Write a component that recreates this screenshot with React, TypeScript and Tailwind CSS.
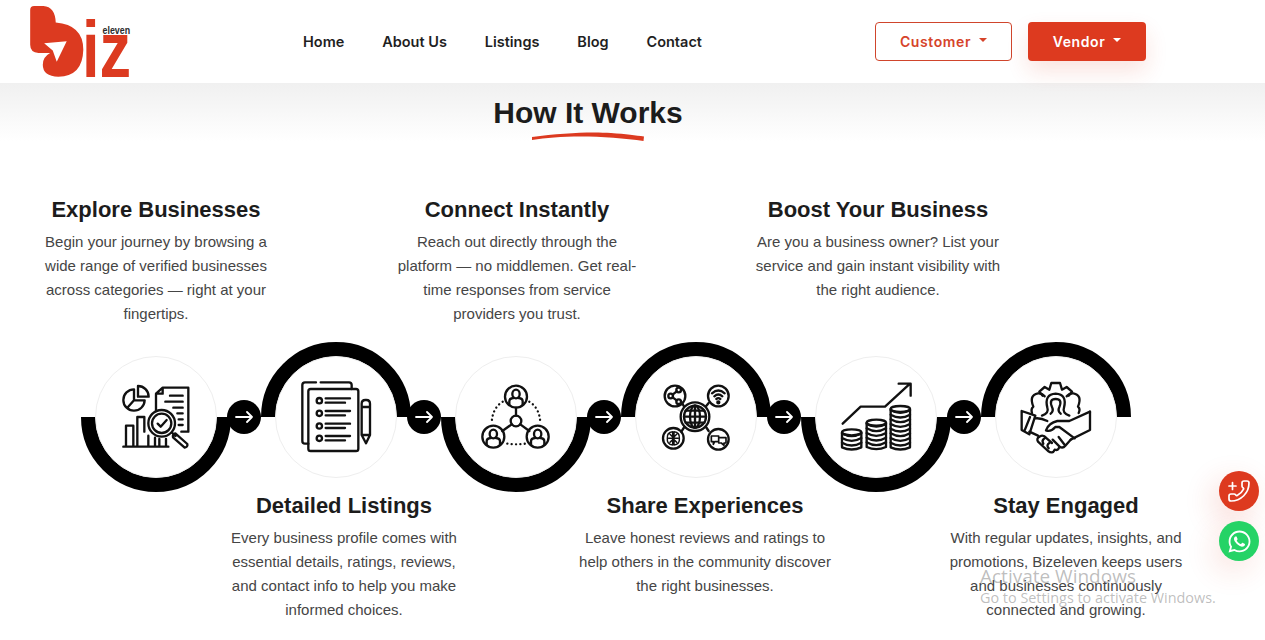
import { FaWhatsapp } from "react-icons/fa";

const sans = "font-['Liberation_Sans',Arial,sans-serif]";

function Logo() {
  return (
    <svg width="150" height="83" viewBox="0 0 450 250" className="block shrink-0 overflow-visible" aria-label="Biz eleven logo">
      <path
        d="M90 30 Q90 18 102 18 L130 18 Q165 20 167 68 Q250 75 250 150 Q248 230 175 231 Q128 230 128 195 Q128 172 150 160 L115 160 Q90 158 90 135 Z"
        fill="#dc3a20"
      />
      <path d="M132 130 L200 124 L170 186 L158 152 Z" fill="#fff" />
      <text x="246" y="231" fontFamily="Liberation Sans" fontWeight="700" fontSize="239" fill="#dc3a20" textLength="148" lengthAdjust="spacingAndGlyphs">
        iz
      </text>
      <text x="308" y="102" fontFamily="Liberation Sans" fontWeight="700" fontSize="34" fill="#2b2b2b" textLength="83" lengthAdjust="spacingAndGlyphs">
        eleven
      </text>
    </svg>
  );
}

function Caret({ color }: { color: string }) {
  return <span className={`inline-block w-0 h-0 border-x-4 border-x-transparent border-t-4 ${color} mb-[3px]`} />;
}

function Header() {
  return (
    <header className="h-[83px] bg-white flex items-center font-['Inter',sans-serif]">
      <Logo />
      <nav className="ml-[153px] w-[399px] flex justify-between text-[14.5px] font-semibold text-[#1f1f1f]">
        <a>Home</a>
        <a>About Us</a>
        <a>Listings</a>
        <a>Blog</a>
        <a>Contact</a>
      </nav>
      <div className="ml-[173px] flex gap-4 text-[14px] font-semibold tracking-[0.6px]">
        <button className="w-[137px] h-[39px] rounded border border-[#d0452c] bg-white text-[#d6432a] flex items-center justify-center gap-2">
          Customer <Caret color="border-t-[#d6432a]" />
        </button>
        <button className="w-[118px] h-[39px] rounded bg-[#dd3a1f] text-white flex items-center justify-center gap-2 shadow-[0_10px_22px_rgba(221,58,31,0.14)]">
          Vendor <Caret color="border-t-white" />
        </button>
      </div>
    </header>
  );
}

/* icons use the same 270x240 box so they sit at the same spot in each circle */
function IconBox({ children }: { children: React.ReactNode }) {
  return (
    <svg width="90" height="80" viewBox="3 6 270 240" fill="none" stroke="#111" strokeWidth="7" strokeLinecap="round" strokeLinejoin="round">
      {children}
    </svg>
  );
}

function AnalyticsIcon() {
  return (
    <IconBox>
      <path d="M72 43 A32 32 0 1 0 104 76 L72 76 Z M72 76 L52 98" />
      <path d="M84 33 A32 32 0 0 1 116 65 L84 65 Z" />
      <path d="M158 38 H235 V170 H214 M158 38 L138 56 V108 M158 38 V56 H138" />
      <path d="M180 62 H218 M166 80 H218 M190 98 H218 M202 115 H218 M206 133 H218 M206 150 H218" />
      <circle cx="155" cy="145" r="40" />
      <circle cx="155" cy="145" r="29" />
      <path d="M143 146 L152 155 L170 135" />
      <path d="M187 174 L196 183 M196 175 L232 207 Q234 216 224 218 L189 187 Q187 178 196 175 Z" />
      <path d="M40 215 H175 M48 215 V152 H70 V215 M82 215 V126 H103 V170 M115 215 V182 M135 215 V188 M148 215 V192 M168 215 V192" />
    </IconBox>
  );
}

function ListingsIcon() {
  return (
    <IconBox>
      <path d="M78 22 H45 Q37 22 37 30 V198 Q37 206 45 206 H55 M92 22 H177 Q185 22 185 30 V42" />
      <rect x="55" y="42" width="150" height="186" rx="7" />
      {[77, 115, 153, 190].map((y) => (
        <g key={y}>
          <circle cx="88" cy={y} r="8" />
          <path d={`M107 ${y - 7} H180 M107 ${y + 6} H165`} />
        </g>
      ))}
      <path d="M215 180 V86 Q215 75 226 75 H229 Q240 75 240 86 V180 L228 205 Z M215 96 H240 M215 180 H240" />
    </IconBox>
  );
}

function Person({ cx, cy }: { cx: number; cy: number }) {
  return (
    <g>
      <circle cx={cx} cy={cy} r="33" />
      <ellipse cx={cx} cy={cy - 8} rx="11" ry="13" />
      <path d={`M${cx - 20} ${cy + 24} V${cy + 14} Q${cx - 20} ${cy + 5} ${cx - 8} ${cy + 4} M${cx + 20} ${cy + 24} V${cy + 14} Q${cx + 20} ${cy + 5} ${cx + 8} ${cy + 4}`} />
    </g>
  );
}

function ConnectIcon() {
  return (
    <IconBox>
      <Person cx={138} cy={65} />
      <Person cx={70} cy={185} />
      <Person cx={203} cy={185} />
      <circle cx="138" cy="138" r="16" />
      <path d="M138 122 V98 M125 148 L97 168 M151 148 L178 168" />
      <g strokeWidth="7" strokeDasharray="0.1 13">
        <path d="M98 80 Q66 100 65 146" />
        <path d="M178 80 Q210 100 211 146" />
        <path d="M112 206 Q138 210 166 206" />
      </g>
    </IconBox>
  );
}

function ShareIcon() {
  return (
    <IconBox>
      <circle cx="135" cy="125" r="43" />
      <circle cx="135" cy="125" r="33" />
      <ellipse cx="135" cy="125" rx="15" ry="33" />
      <path d="M135 92 V158 M102 125 H168 M107 107 H163 M107 143 H163" />
      <path d="M96 84 L102 94 M176 84 L168 94 M94 170 L103 156 M176 168 L168 156" />
      <circle cx="75" cy="63" r="31" />
      <circle cx="86" cy="45" r="7" />
      <circle cx="62" cy="63" r="7" />
      <circle cx="86" cy="80" r="7" />
      <path d="M68 59 L80 49 M68 67 L80 76" />
      <circle cx="205" cy="63" r="31" />
      <path d="M186 55 Q205 38 224 55 M193 64 Q205 53 217 64 M199 72 Q205 67 211 72" />
      <circle cx="205" cy="82" r="3" fill="#111" />
      <circle cx="70" cy="190" r="31" />
      <path d="M68 170 Q50 172 52 190 Q50 208 68 210 Z M72 170 Q90 172 88 190 Q90 208 72 210 Z M56 190 H66 M74 190 H84 M60 178 L66 184 M80 178 L74 184 M60 202 L66 196 M80 202 L74 196" strokeWidth="4.5" />
      <circle cx="205" cy="193" r="31" />
      <path d="M184 183 H206 V200 H194 L190 208 V200 H184 Z M210 188 H228 V204 H222 V211 L214 204 H206" strokeWidth="5" />
    </IconBox>
  );
}

function Coins({ x, top, count }: { x: number; top: number; count: number }) {
  const w = 29;
  const step = 14;
  const bottom = top + count * step;
  return (
    <g>
      <ellipse cx={x} cy={top} rx={w} ry="9" />
      {Array.from({ length: count }).map((_, i) => (
        <path key={i} d={`M${x - w} ${top + i * step + 3} Q${x} ${top + i * step + 20} ${x + w} ${top + i * step + 3}`} />
      ))}
      <path d={`M${x - w} ${top} V${bottom + 3} Q${x} ${bottom + 16} ${x + w} ${bottom + 3} V${top}`} />
    </g>
  );
}

function GrowthIcon() {
  return (
    <IconBox>
      <path d="M38 146 L92 95 H165 L240 26 M206 26 H242 V62" />
      <Coins x={65} top={172} count={3} />
      <Coins x={139} top={143} count={5} />
      <Coins x={211} top={102} count={8} />
    </IconBox>
  );
}

function EngageIcon() {
  return (
    <IconBox>
      {/* gear behind the people */}
      <path d="M98 62 L88 50 L104 36 L118 44 L124 24 H150 L156 44 L170 36 L186 50 L176 62" />
      {/* side heads */}
      <path d="M66 114 Q62 102 70 95 Q56 60 84 55 Q96 54 104 64 M206 114 Q212 102 204 95 Q218 60 190 55 Q178 54 170 64" />
      {/* centre person */}
      <path d="M96 122 Q118 114 112 98 Q102 58 137 56 Q172 58 162 98 Q156 114 178 122" />
      <path d="M122 116 Q132 108 126 96 Q116 72 137 72 Q158 72 148 96 Q142 108 152 116" />
      {/* cuffs */}
      <path d="M35 108 L76 122 L58 178 L35 165 Z M60 126 L44 166" />
      <path d="M240 110 V165 L182 194" />
      <path d="M240 110 L178 138 H142 Q116 144 108 166 Q122 172 136 156 H148 L194 190" />
      {/* shaking hands and fingers */}
      <path d="M76 130 Q92 128 112 138 M58 170 L84 182 M182 194 L166 212 Q158 222 148 214 Q146 228 134 224 Q128 238 114 228 L84 200 Q78 190 90 184 Q100 178 110 190 L126 204 M100 206 Q94 196 104 190 M116 220 Q108 210 118 204 M148 214 L128 194 M166 212 L146 186" />
    </IconBox>
  );
}

const stepIcons = [AnalyticsIcon, ListingsIcon, ConnectIcon, ShareIcon, GrowthIcon, EngageIcon];

const topSteps = [
  {
    title: "Explore Businesses",
    text: "Begin your journey by browsing a wide range of verified businesses across categories — right at your fingertips.",
  },
  {
    title: "Connect Instantly",
    text: "Reach out directly through the platform — no middlemen. Get real-time responses from service providers you trust.",
  },
  {
    title: "Boost Your Business",
    text: "Are you a business owner? List your service and gain instant visibility with the right audience.",
  },
];

const bottomSteps = [
  {
    title: "Detailed Listings",
    text: "Every business profile comes with essential details, ratings, reviews, and contact info to help you make informed choices.",
  },
  {
    title: "Share Experiences",
    text: "Leave honest reviews and ratings to help others in the community discover the right businesses.",
  },
  {
    title: "Stay Engaged",
    text: "With regular updates, insights, and promotions, Bizeleven keeps users and businesses continuously connected and growing.",
  },
];

function StepText({ title, text }: { title: string; text: string }) {
  return (
    <div className="w-[252px] text-center">
      <h3 className="text-[22px] leading-7 font-bold text-[#1c1c1c]">{title}</h3>
      <p className="mt-[6px] text-[15px] leading-6 text-[#454545]">{text}</p>
    </div>
  );
}

function Wave() {
  return (
    <div className="flex pl-[66px] mt-4 h-[150px]">
      {stepIcons.map((Icon, i) => (
        <div key={i} className="relative w-[180px] h-[150px] flex items-center justify-center">
          <svg width="150" height="150" viewBox="0 0 150 150" fill="none" className="absolute left-[15px] top-0">
            <path
              d={i % 2 === 0 ? "M7.5 75 A67.5 67.5 0 0 0 142.5 75" : "M7.5 75 A67.5 67.5 0 0 1 142.5 75"}
              stroke="#000"
              strokeWidth="15"
            />
          </svg>
          <div className="relative w-[122px] h-[122px] rounded-full bg-white border border-[#eeeeee] flex items-center justify-center">
            <Icon />
          </div>
          {i < 5 && (
            <span className="absolute z-10 left-[161px] top-[58px] w-[34px] h-[34px] rounded-full bg-black flex items-center justify-center">
              <svg width="18" height="16" viewBox="0 0 18 16" fill="none" stroke="#fff" strokeWidth="1.8" strokeLinecap="round" strokeLinejoin="round">
                <path d="M1 8 H17 M12 3 L17 8 L12 13" />
              </svg>
            </span>
          )}
        </div>
      ))}
    </div>
  );
}

export default function App() {
  return (
    <div className={`relative h-[640px] overflow-hidden bg-white ${sans}`}>
      <Header />
      <section className="bg-gradient-to-b from-[#f0f0f0] to-white to-[58px]">
        <div className="w-[1176px] pt-[12px] text-center">
          <h2 className="text-[30px] leading-9 font-bold text-[#1c1c1c]">How It Works</h2>
          <svg width="114" height="10" viewBox="0 0 114 10" className="block mx-auto mt-[1px]">
            <path d="M1 5 C30 1 60 -0.5 80 1 C95 2 105 3.5 113 4.5 L112.5 9 C95 6.5 70 4.5 50 4.5 C30 4.5 15 6 1 8 Z" fill="#dc3a20" />
          </svg>
        </div>
        <div className="flex gap-[109px] pl-[30px] mt-[54px]">
          {topSteps.map((s) => (
            <StepText key={s.title} {...s} />
          ))}
        </div>
        <Wave />
        <div className="flex gap-[109px] pl-[218px]">
          {bottomSteps.map((s) => (
            <StepText key={s.title} {...s} />
          ))}
        </div>
      </section>

      {/* floating contact buttons */}
      <div className="absolute right-[6px] top-[471px] flex flex-col gap-[10px] z-20">
        <span className="w-10 h-10 rounded-full bg-[#dd3a1f] flex items-center justify-center text-white shadow-[-6px_10px_30px_rgba(221,58,31,0.18)]">
          <svg width="24" height="24" viewBox="0 0 24 24" fill="none" stroke="currentColor" strokeWidth="1.7" strokeLinecap="round" strokeLinejoin="round">
            <g transform="translate(24 0) scale(-1 1)">
              <path d="M13.832 16.568a1 1 0 0 0 1.213-.303l.355-.465A2 2 0 0 1 17 15h3a2 2 0 0 1 2 2v3a2 2 0 0 1-2 2A18 18 0 0 1 2 4a2 2 0 0 1 2-2h3a2 2 0 0 1 2 2v3a2 2 0 0 1-.8 1.6l-.468.351a1 1 0 0 0-.292 1.233 14 14 0 0 0 6.392 6.384" />
            </g>
            <path d="M2 7 H9 M5.5 3.5 V10.5" />
          </svg>
        </span>
        <span className="w-10 h-10 rounded-full bg-[#25d366] flex items-center justify-center text-white shadow-[-6px_10px_30px_rgba(221,58,31,0.14)]">
          <FaWhatsapp size={25} />
        </span>
      </div>

      {/* windows activation watermark */}
      <div className="absolute left-[980px] top-[564px] z-30 font-['Open_Sans',sans-serif] text-[rgba(110,110,110,0.45)] pointer-events-none">
        <div className="text-[19px] leading-[24px]">Activate Windows</div>
        <div className="text-[14.4px] leading-[20px] whitespace-nowrap">Go to Settings to activate Windows.</div>
      </div>
    </div>
  );
}
